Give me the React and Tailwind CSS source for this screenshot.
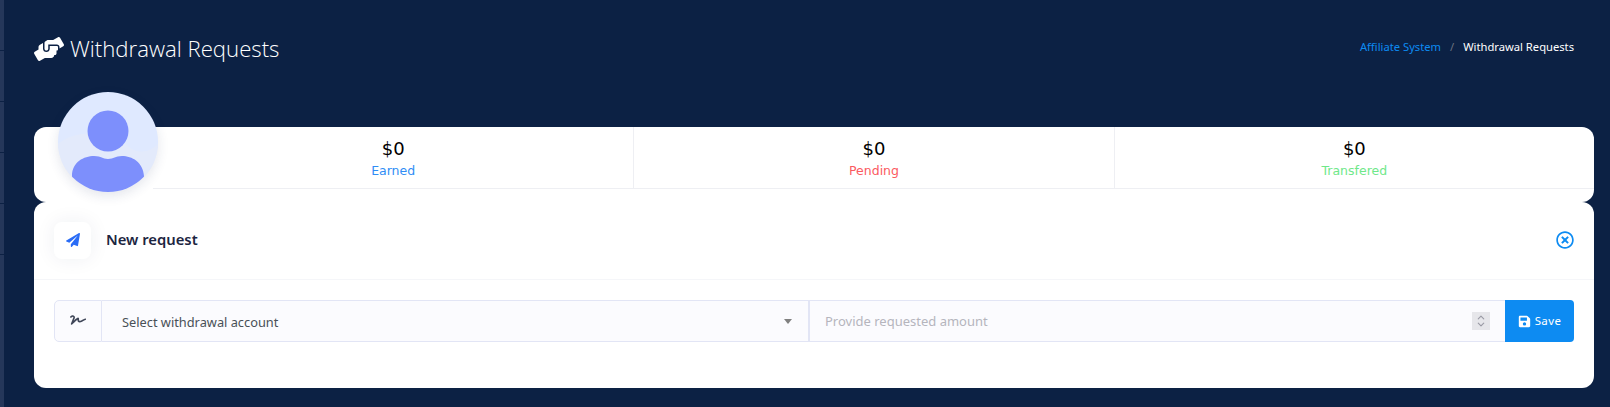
import { FaHandsHelping, FaPaperPlane, FaSave, FaRegTimesCircle, FaSignature } from "react-icons/fa";
import { ChevronUp, ChevronDown } from "lucide-react";

function Avatar() {
  return (
    <div className="absolute left-[24px] top-[-35px] h-[100px] w-[100px] overflow-hidden rounded-full bg-[#dfe9ff] shadow-[0_4px_12px_rgba(30,50,100,0.12)]">
      <svg viewBox="0 0 100 100" className="h-full w-full">
        <path d="M0 52 C20 35 55 40 72 56 C82 62 92 60 100 52 L100 100 L0 100 Z" fill="#e3eafb" />
        <circle cx="50" cy="39" r="20.5" fill="#7d8ffc" />
        <path d="M14 84 C14 70 26 64 36 64 C44 64 44 67 50 67 C56 67 57 64 64 64 C74 64 85 70 86 84 L86 100 L14 100 Z" fill="#7d8ffc" />
      </svg>
    </div>
  );
}

function Stat({ label, color, border }) {
  return (
    <div className={`flex h-[62px] flex-col items-center border-b border-[#eeeff3] pt-[10px] ${border ? "border-l" : ""}`}>
      <div className="text-[18px] leading-[24px] text-black">$0</div>
      <div className={`pt-[1px] text-[12.5px] leading-[18px] ${color}`}>{label}</div>
    </div>
  );
}

export default function App() {
  return (
    <div className="flex h-[407px] overflow-hidden bg-[#0c2144] font-['Noto_Sans',sans-serif]">
      <div className="flex w-[4px] shrink-0 flex-col bg-[#25375a]">
        <div className="h-[51px] border-b border-[#0c2144]" />
        <div className="h-[51px] border-b border-[#0c2144]" />
        <div className="h-[51px] border-b border-[#0c2144]" />
        <div className="h-[51px] border-b border-[#0c2144]" />
        <div className="h-[51px] border-b border-[#0c2144]" />
      </div>

      <main className="flex min-w-0 flex-1 flex-col pl-[30px] pr-[16px]">
        <header className="flex h-[127px] items-start justify-between pr-[20px] pt-[34px]">
          <div className="flex items-center gap-[6px]">
            <FaHandsHelping className="text-[30px] text-white" />
            <h1 className="font-['Open_Sans',sans-serif] text-[22.2px] font-light leading-[30px] text-white">
              Withdrawal Requests
            </h1>
          </div>
          <div className="flex items-center pt-[4px] text-[11.2px] leading-[18px]">
            <span className="text-[#0d8bf2]">Affiliate System</span>
            <span className="mx-[9px] text-[#6b7280]">/</span>
            <span className="text-white">Withdrawal Requests</span>
          </div>
        </header>

        <section className="relative h-[75px] rounded-[12px] bg-white pl-[119px]">
          <Avatar />
          <div className="grid grid-cols-3 font-['Comic_Sans_MS','DejaVu_Sans',sans-serif]">
            <Stat label="Earned" color="text-[#2f8df5]" />
            <Stat label="Pending" color="text-[#fb5a5f]" border />
            <Stat label="Transfered" color="text-[#6fe88a]" border />
          </div>
        </section>

        <section className="h-[186px] rounded-[12px] bg-white">
          <div className="flex h-[78px] items-center justify-between border-b border-[#f5f6f9] px-[20px] pb-[1px]">
            <div className="flex items-center gap-[15px]">
              <div className="flex h-[37px] w-[37px] items-center justify-center rounded-[8px] bg-white shadow-[0_0_20px_rgba(30,40,80,0.07)]">
                <FaPaperPlane className="text-[14px] text-[#2a6cf6]" />
              </div>
              <h2 className="mb-[2px] text-[14.8px] font-semibold leading-[20px] text-[#1c2541]">New request</h2>
            </div>
            <FaRegTimesCircle className="text-[18px] text-[#0d8bf2]" />
          </div>

          <div className="mt-[20px] flex h-[42px] px-[20px]">
            <div className="flex w-[48px] items-center justify-center rounded-l-[5px] border border-[#e2e5f5] bg-[#fbfbfe]">
              <FaSignature className="mb-[3px] text-[16px] text-[#3f4658]" />
            </div>
            <div className="flex w-[708px] items-center justify-between border-y border-r-2 border-[#e2e5f5] bg-[#fbfbfe] pl-[20px] pr-[16px]">
              <span className="pt-[4px] text-[12.8px] text-[#495057]">Select withdrawal account</span>
              <span className="h-0 w-0 border-x-[4px] border-t-[5px] border-x-transparent border-t-[#808080]" />
            </div>
            <div className="flex flex-1 items-center justify-between border-y border-[#e2e5f5] bg-[#fbfbfe] px-[15px]">
              <span className="pt-[1px] text-[13px] text-[#b5b5bd]">Provide requested amount</span>
              <span className="flex h-[18px] w-[18px] flex-col items-center justify-center bg-[#e6e6ea] text-[#9a9aa5]">
                <ChevronUp size={12} strokeWidth={2.5} className="-mb-[2px]" />
                <ChevronDown size={12} strokeWidth={2.5} className="-mt-[2px]" />
              </span>
            </div>
            <button type="button" className="flex w-[69px] items-center justify-center gap-[4px] rounded-r-[4px] bg-[#0d8bf2] text-[11.5px] tracking-[0.4px] text-white">
              <FaSave className="text-[13px]" />
              Save
            </button>
          </div>
        </section>
      </main>
    </div>
  );
}
